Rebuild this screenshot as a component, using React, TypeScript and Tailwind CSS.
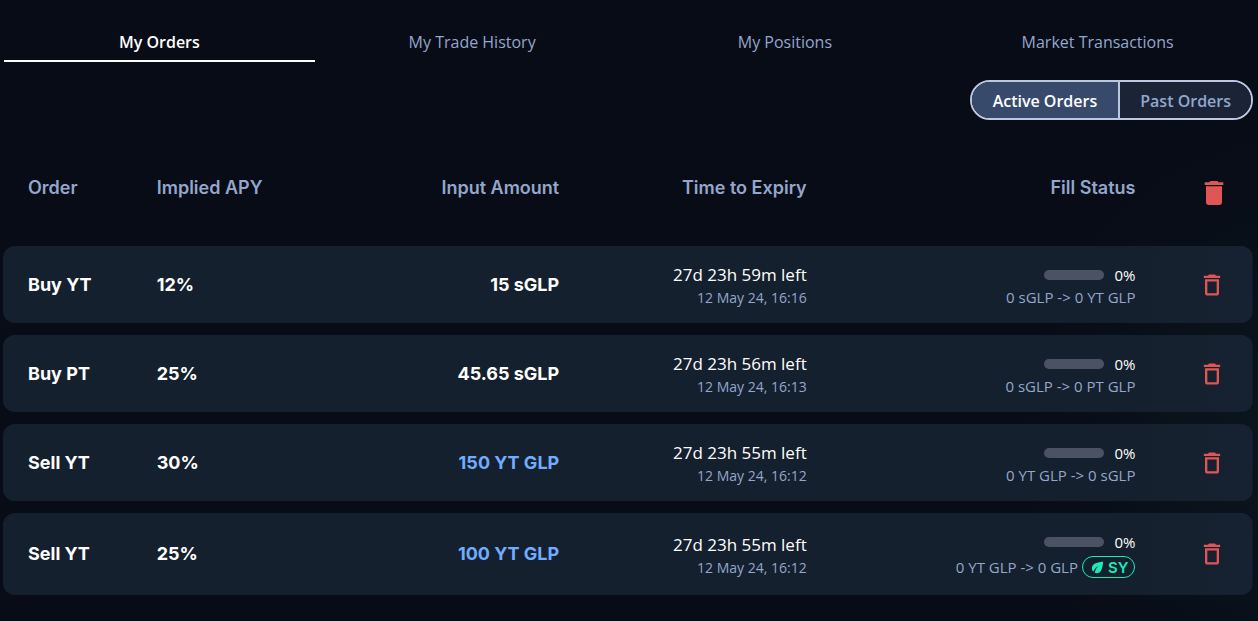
import { useState } from "react";
import { MdDelete, MdDeleteOutline, MdEco } from "react-icons/md";

type Order = {
  side: string;
  apy: string;
  amount: string;
  accent: boolean;
  left: string;
  expiry: string;
  percent: number;
  fill: string;
  sy: boolean;
};

const TABS = ["My Orders", "My Trade History", "My Positions", "Market Transactions"];

const ORDERS: Order[] = [
  { side: "Buy YT", apy: "12%", amount: "15 sGLP", accent: false, left: "27d 23h 59m left", expiry: "12 May 24, 16:16", percent: 0, fill: "0 sGLP -> 0 YT GLP", sy: false },
  { side: "Buy PT", apy: "25%", amount: "45.65 sGLP", accent: false, left: "27d 23h 56m left", expiry: "12 May 24, 16:13", percent: 0, fill: "0 sGLP -> 0 PT GLP", sy: false },
  { side: "Sell YT", apy: "30%", amount: "150 YT GLP", accent: true, left: "27d 23h 55m left", expiry: "12 May 24, 16:12", percent: 0, fill: "0 YT GLP -> 0 sGLP", sy: false },
  { side: "Sell YT", apy: "25%", amount: "100 YT GLP", accent: true, left: "27d 23h 55m left", expiry: "12 May 24, 16:12", percent: 0, fill: "0 YT GLP -> 0 GLP", sy: true },
];

function Tabs() {
  const [current, setCurrent] = useState(0);
  return (
    <div role="tablist" className="grid grid-cols-4 gap-0.5 pl-px pt-6">
      {TABS.map((label, i) => (
        <button
          key={label}
          type="button"
          role="tab"
          aria-selected={i === current}
          onClick={() => setCurrent(i)}
          className={
            i === current
              ? "border-b-2 border-white pb-1 pt-1 text-base leading-7 font-semibold text-white"
              : "border-b-2 border-transparent pb-1 pt-1 text-base leading-7 text-[#94a6cc]"
          }
        >
          {label}
        </button>
      ))}
    </div>
  );
}

function OrderFilter() {
  const [past, setPast] = useState(false);
  const on = "bg-[#374a6b] text-white";
  const off = "bg-[#1a2436] text-[#94a6cc]";
  return (
    <div className="mt-[18px] flex justify-end">
      <div className="flex h-10 divide-x-2 divide-[#bcc8e0] overflow-hidden rounded-full border-2 border-[#bcc8e0] text-base font-semibold">
        <button type="button" aria-pressed={!past} onClick={() => setPast(false)} className={`px-[21px] pt-0.5 ${past ? off : on}`}>
          Active Orders
        </button>
        <button type="button" aria-pressed={past} onClick={() => setPast(true)} className={`px-5 pt-0.5 ${past ? on : off}`}>
          Past Orders
        </button>
      </div>
    </div>
  );
}

function SyBadge() {
  return (
    <span className="my-px flex h-[22px] items-center gap-0.5 rounded-full border border-[#1de9b6] px-1.5 font-['Inter',sans-serif] text-[15px] font-semibold text-[#1de9b6]">
      <MdEco className="size-[17px]" aria-hidden="true" />
      SY
    </span>
  );
}

function OrderRow({ order }: { order: Order }) {
  return (
    <tr className="bg-[linear-gradient(90deg,#15202e_90%,#162231_100%)]">
      <td className="rounded-l-xl px-[25px] font-['Inter',sans-serif] text-lg font-bold">{order.side}</td>
      <td className="px-[25px] font-['Inter',sans-serif] text-lg font-bold">{order.apy}</td>
      <td
        className={
          order.accent
            ? "px-[25px] text-right font-['Inter',sans-serif] text-lg font-bold text-[#71acff]"
            : "px-[25px] text-right font-['Inter',sans-serif] text-lg font-bold"
        }
      >
        {order.amount}
      </td>
      <td className="px-[25px] py-4 text-right">
        <div className="text-[17px] leading-[26px]">{order.left}</div>
        <div className="text-sm leading-[19px] text-[#94a6cc]">{order.expiry}</div>
      </td>
      <td className="px-[25px] py-4">
        <div className="flex flex-col items-end">
          <div className="flex h-[26px] items-center gap-2.5 text-[15px]">
            <div className="h-2.5 w-[60px] overflow-hidden rounded-full bg-[#4a5263]">
              <div className="h-full bg-[#1de9b6]" style={{ width: `${order.percent}%` }} />
            </div>
            {order.percent}%
          </div>
          <div className="flex items-center gap-1 text-[15px] leading-[19px] whitespace-nowrap text-[#94a6cc]">
            {order.fill}
            {order.sy && <SyBadge />}
          </div>
        </div>
      </td>
      <td className="rounded-r-xl pl-[38px] text-[#e05555]">
        <button type="button" aria-label={`Cancel ${order.side} order`} className="block">
          <MdDeleteOutline className="size-7" />
        </button>
      </td>
    </tr>
  );
}

export default function App() {
  return (
    <main className="min-h-screen bg-[#080c16] bg-[radial-gradient(circle_at_105%_70%,#0b171e_0,#080c16_300px)] pr-[5px] pl-[3px] font-['Open_Sans',sans-serif] text-white">
      <Tabs />
      <OrderFilter />
      <table className="mt-5 w-full table-fixed border-separate border-spacing-x-0 border-spacing-y-3">
        <colgroup>
          <col className="w-[10.3%]" />
          <col className="w-[18%]" />
          <col className="w-[18.2%]" />
          <col className="w-[19.8%]" />
          <col className="w-[26.3%]" />
          <col className="w-[7.4%]" />
        </colgroup>
        <thead className="font-['Inter',sans-serif] text-lg leading-[22px] text-[#94a6cc]">
          <tr className="align-top">
            <th scope="col" className="px-[25px] py-[25px] text-left font-semibold">Order</th>
            <th scope="col" className="px-[25px] py-[25px] text-left font-semibold">Implied APY</th>
            <th scope="col" className="px-[25px] py-[25px] text-right font-semibold">Input Amount</th>
            <th scope="col" className="px-[25px] py-[25px] text-right font-semibold">Time to Expiry</th>
            <th scope="col" className="px-[25px] py-[25px] text-right font-semibold">Fill Status</th>
            <th scope="col" className="py-[25px] pl-[38px] text-[#e05555]">
              <button type="button" aria-label="Cancel all orders" className="block">
                <MdDelete className="size-8" />
              </button>
            </th>
          </tr>
        </thead>
        <tbody>
          {ORDERS.map((order, i) => (
            <OrderRow key={i} order={order} />
          ))}
        </tbody>
      </table>
    </main>
  );
}
